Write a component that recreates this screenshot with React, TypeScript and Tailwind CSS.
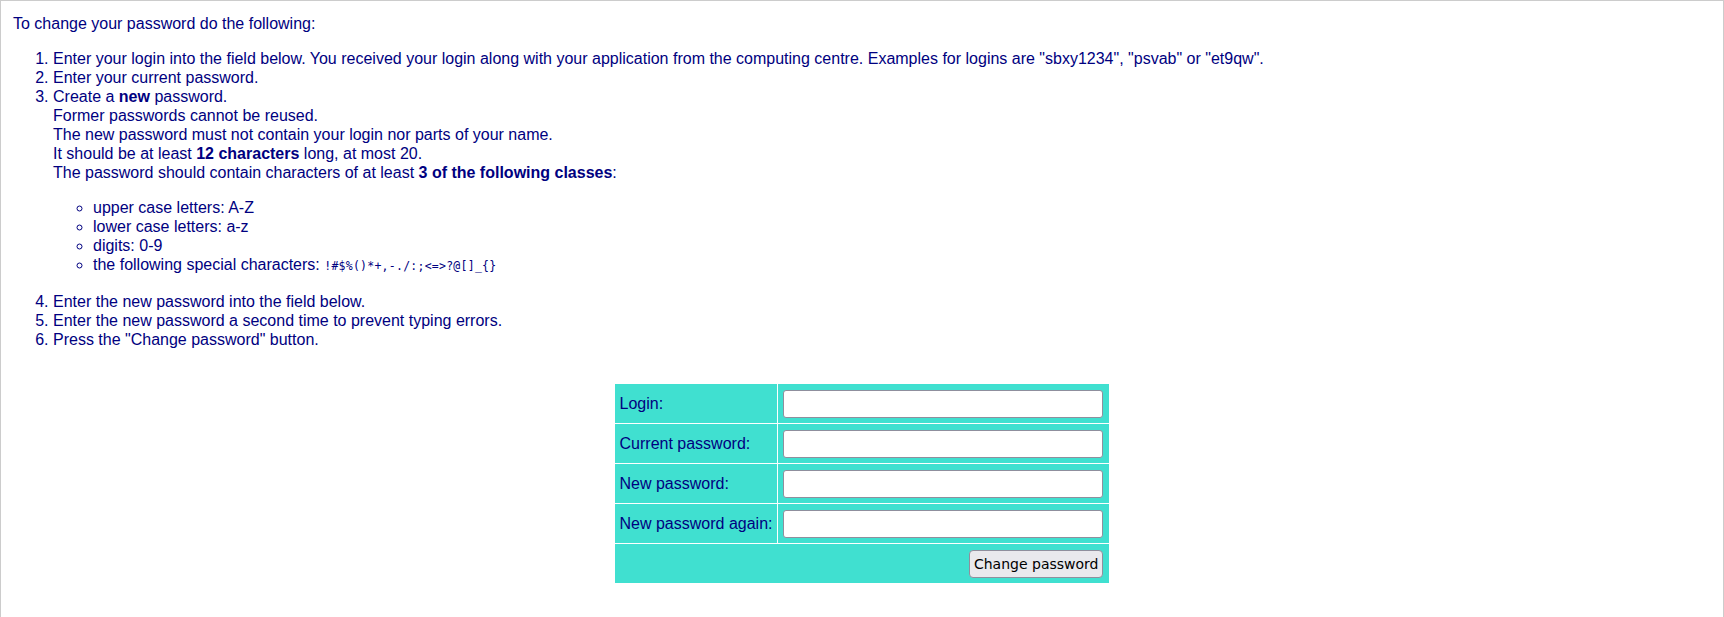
import React from "react";

const Row = ({ label, type }: { label: string; type: string }) => (
  <tr>
    <td className="bg-[#40e0d0] h-[39px] w-[162px] px-[5px] py-0 align-middle whitespace-nowrap">{label}</td>
    <td className="bg-[#40e0d0] h-[39px] w-[331px] pl-[5px] pr-[6px] py-0 align-middle">
      <input
        type={type}
        className="block w-[320px] h-[28px] bg-white border border-[#8f8f9d] rounded-[3px] outline-none"
      />
    </td>
  </tr>
);

export default function App() {
  return (
    <div className="border border-[#cccccc] min-h-[660px] pl-[12px] pr-3 pt-[13px] font-['Liberation_Sans',Arial,sans-serif] text-[16px] leading-[19px] text-[#000080] bg-white">
      <p className="mb-4">To change your password do the following:</p>
      <ol className="list-decimal pl-10 mb-4">
        <li>
          Enter your login into the field below. You received your login along with your application from the computing centre. Examples for logins are "sbxy1234", "psvab" or "et9qw".
        </li>
        <li>Enter your current password.</li>
        <li>
          Create a <b>new</b> password.
          <br />
          Former passwords cannot be reused.
          <br />
          The new password must not contain your login nor parts of your name.
          <br />
          It should be at least <b>12 characters</b> long, at most 20.
          <br />
          The password should contain characters of at least <b>3 of the following classes</b>:
          <ul className="list-[circle] pl-10 my-4">
            <li>upper case letters: A-Z</li>
            <li>lower case letters: a-z</li>
            <li>digits: 0-9</li>
            <li>
              the following special characters:{" "}
              <code className="font-['DejaVu_Sans_Mono',monospace] text-[11.5px] tracking-[0.25px]">{"!#$%()*+,-./:;<=>?@[]_{}"}</code>
            </li>
          </ul>
        </li>
        <li>Enter the new password into the field below.</li>
        <li>Enter the new password a second time to prevent typing errors.</li>
        <li>Press the "Change password" button.</li>
      </ol>
      <table className="mx-auto mt-[34px] border-separate border-spacing-[1px]">
        <tbody>
          <Row label="Login:" type="text" />
          <Row label="Current password:" type="password" />
          <Row label="New password:" type="password" />
          <Row label="New password again:" type="password" />
          <tr>
            <td colSpan={2} className="bg-[#40e0d0] h-[39px] pr-[6px] py-0 align-middle">
              <div className="flex justify-end">
                <button className="h-[28px] px-[4px] bg-[#e9e9ed] border border-[#8f8f9d] rounded-[4px] text-black font-['DejaVu_Sans',sans-serif] text-[14px] leading-none">
                  Change password
                </button>
              </div>
            </td>
          </tr>
        </tbody>
      </table>
    </div>
  );
}
